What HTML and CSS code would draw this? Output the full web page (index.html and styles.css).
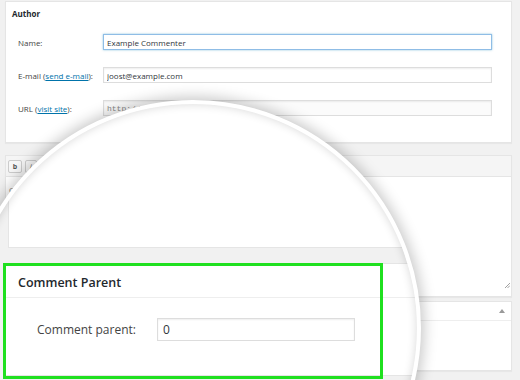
FILE: index.html
```html
<!DOCTYPE html>
<html lang="en">
<head>
  <meta charset="UTF-8">
  <meta name="viewport" content="width=device-width, initial-scale=1.0">
  <title>Edit Comment</title>
  <link rel="stylesheet" href="styles.css">
</head>
<body>
  <div class="page">
    <section class="postbox author">
      <h2 class="box-title">Author</h2>
      <div class="fields">
        <label>Name:</label>
        <input class="field focus" type="text" value="Example Commenter">
        <label>E-mail (<a href="#">send e-mail</a>):</label>
        <input class="field" type="text" value="joost@example.com">
        <label>URL (<a href="#">visit site</a>):</label>
        <input class="field url" type="text" value="http://">
      </div>
    </section>

    <section class="postbox editor">
      <div class="quicktags">
        <button class="qt qt-b">b</button>
        <button class="qt qt-i">i</button>
        <button class="qt">link</button>
        <button class="qt">b-quote</button>
        <button class="qt">del</button>
      </div>
      <div class="editor-text">Cheers, great post!</div>
      <svg class="resize" width="6" height="6" viewBox="0 0 6 6">
        <path d="M1 6 L6 1 M3.5 6 L6 3.5" stroke="#888" stroke-width="0.8"/>
      </svg>
    </section>

    <section class="postbox small-box">
      <div class="small-head">
        <svg width="6" height="4" viewBox="0 0 6 4"><path d="M0 4 L3 0 L6 4 Z" fill="#999"/></svg>
      </div>
    </section>
  </div>

  <!-- magnifier over the comment parent box -->
  <div class="lens">
    <div class="lens-view">
      <div class="zoom-editor"></div>
      <section class="zoom-box">
        <h2 class="zoom-title">Comment Parent</h2>
        <div class="zoom-row">
          <label class="zoom-label">Comment parent:</label>
          <input class="zoom-input" type="text" value="0">
        </div>
      </section>
      <div class="highlight"></div>
    </div>
  </div>
</body>
</html>
```

FILE: styles.css
```css
html, body {
  margin: 0;
  height: 100%;
  overflow: hidden;
}
body {
  background-color: #f1f1f1;
  font-family: 'Open Sans', sans-serif;
  color: #444;
  position: relative;
}
.page {
  padding: 1px 8px 0 5px;
}
.postbox {
  background: #fff;
  border: 1px solid #e5e5e5;
  box-shadow: 0 1px 1px rgba(0, 0, 0, 0.04);
  box-sizing: border-box;
}
.author {
  height: 142px;
}
.box-title {
  margin: 0;
  padding: 6px 6px 0;
  font-size: 8px;
  line-height: 11px;
  font-weight: 700;
  color: #23282d;
}
.fields {
  display: grid;
  grid-template-columns: 85px 389px;
  row-gap: 17px;
  align-items: center;
  margin: 15px 0 0 12px;
  font-size: 8px;
}
.fields a {
  color: #0073aa;
  text-decoration: underline;
}
.field {
  height: 16px;
  margin: 0;
  padding: 0 3px;
  box-sizing: border-box;
  border: 1px solid #ddd;
  box-shadow: inset 0 1px 2px rgba(0, 0, 0, 0.07);
  background: #fff;
  font-family: 'Open Sans', sans-serif;
  font-size: 8px;
  color: #32373c;
  outline: none;
}
.field.focus {
  border-color: #8fbde6;
  box-shadow: 0 0 2px rgba(30, 140, 190, 0.5);
}
.field.url {
  font-family: 'Liberation Mono', monospace;
  color: #888;
  background: #fbfbfb;
}

.editor {
  margin-top: 12px;
  height: 142px;
  position: relative;
}
.quicktags {
  height: 21px;
  box-sizing: border-box;
  padding: 4px 0 0 2px;
  display: flex;
  gap: 3px;
  align-items: flex-start;
  background: #f5f5f5;
  border-bottom: 1px solid #e5e5e5;
}
.qt {
  height: 13px;
  min-width: 12px;
  padding: 0 3px;
  box-sizing: border-box;
  border: 1px solid #ccc;
  border-radius: 2px;
  background: #f7f7f7;
  font-family: 'Open Sans', sans-serif;
  font-size: 7px;
  line-height: 11px;
  color: #555;
}
.qt-b {
  min-width: 14px;
  font-weight: 700;
}
.qt-i {
  font-style: italic;
}
.editor-text {
  padding: 7px 3px;
  font-size: 8px;
  line-height: 11px;
  color: #777;
}
.resize {
  position: absolute;
  right: 1px;
  bottom: 8px;
}
.small-box {
  margin-top: 4px;
  height: 70px;
}
.small-head {
  height: 19px;
  box-sizing: border-box;
  border-bottom: 1px solid #eee;
  display: flex;
  align-items: center;
  justify-content: flex-end;
  padding-right: 6px;
}

/* magnifier */
.lens {
  position: absolute;
  left: -35px;
  top: 100px;
  width: 456px;
  height: 456px;
  box-sizing: border-box;
  border: 4px solid #fff;
  border-radius: 50%;
  overflow: hidden;
  background: #f1f1f1;
  box-shadow: 0 0 14px 3px rgba(0, 0, 0, 0.22);
}
.lens::after {
  content: "";
  position: absolute;
  inset: 0;
  border-radius: 50%;
  box-shadow: inset 0 0 10px rgba(0, 0, 0, 0.16);
}
.lens-view {
  position: absolute;
  left: 31px;
  top: -104px;
  width: 560px;
  height: 380px;
}
.zoom-editor {
  margin-left: 8px;
  height: 247px;
  background: #fff;
  border: 1px solid #e5e5e5;
  border-top: 0;
}
.zoom-box {
  margin: 15px 0 0 3px;
  height: 113px;
  box-sizing: border-box;
  background: #fff;
  border: 1px solid #e5e5e5;
}
.zoom-title {
  margin: 0;
  height: 34px;
  box-sizing: border-box;
  padding: 11px 0 0 14px;
  border-bottom: 1px solid #eee;
  font-size: 12.5px;
  line-height: 16px;
  font-weight: 600;
  color: #23282d;
}
.zoom-row {
  display: flex;
  align-items: center;
  padding: 20px 0 0 33px;
}
.zoom-label {
  width: 120px;
  font-size: 12px;
  color: #444;
}
.zoom-input {
  width: 198px;
  height: 23px;
  margin: 0;
  padding: 0 5px;
  box-sizing: border-box;
  border: 1px solid #ddd;
  box-shadow: inset 0 1px 2px rgba(0, 0, 0, 0.07);
  font-family: 'Open Sans', sans-serif;
  font-size: 12px;
  color: #32373c;
  outline: none;
}
.highlight {
  position: absolute;
  left: 3px;
  top: 263px;
  width: 380px;
  height: 116px;
  box-sizing: border-box;
  border: 3px solid #1fe01f;
}
```
